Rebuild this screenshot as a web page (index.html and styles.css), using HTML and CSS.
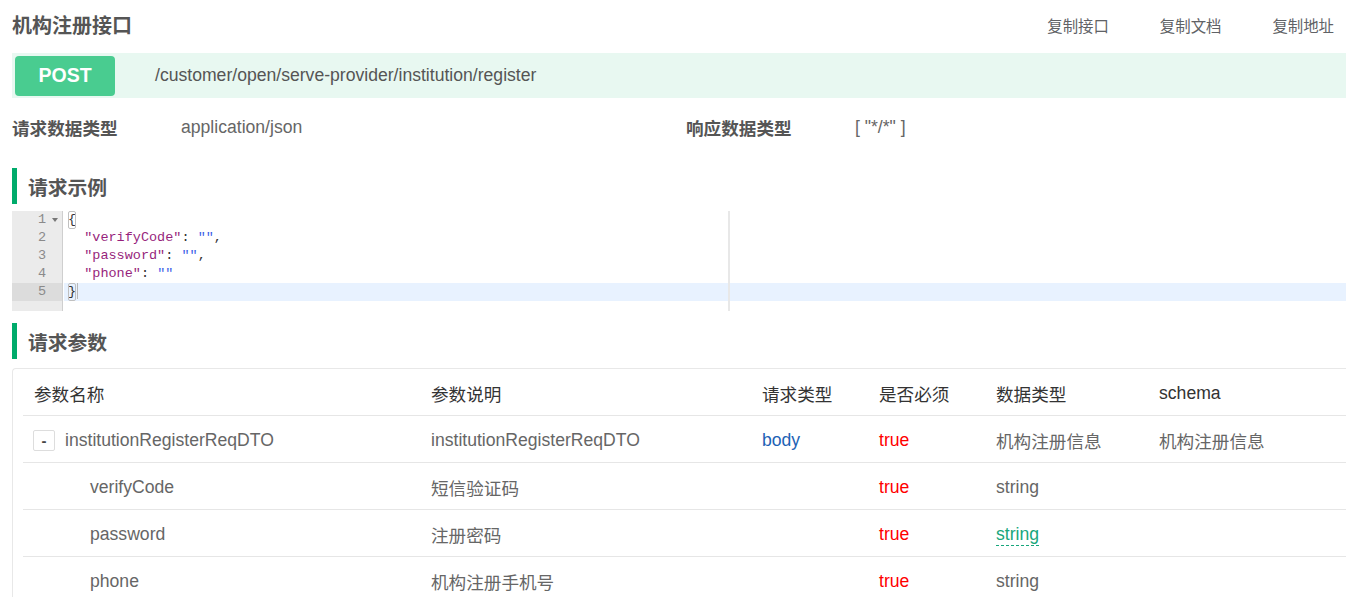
FILE: index.html
```html
<!DOCTYPE html>
<html lang="zh-CN">
<head>
<meta charset="utf-8">
<title>机构注册接口</title>
<link rel="stylesheet" href="styles.css">
</head>
<body>
<div class="page">
  <header class="top">
    <h1 class="title">机构注册接口</h1>
    <nav class="copy-links">
      <a class="copy-link">复制接口</a>
      <a class="copy-link">复制文档</a>
      <a class="copy-link">复制地址</a>
    </nav>
  </header>

  <div class="method-bar">
    <span class="method">POST</span>
    <span class="path">/customer/open/serve-provider/institution/register</span>
  </div>

  <div class="types">
    <div class="type-item">
      <span class="type-label">请求数据类型</span>
      <span class="type-value">application/json</span>
    </div>
    <div class="type-item">
      <span class="type-label">响应数据类型</span>
      <span class="type-value">[ "*/*" ]</span>
    </div>
  </div>

  <h2 class="section-title">请求示例</h2>

  <div class="editor">
    <div class="gutter">
      <div class="gutter-cell">1<span class="fold"></span></div>
      <div class="gutter-cell">2</div>
      <div class="gutter-cell">3</div>
      <div class="gutter-cell">4</div>
      <div class="gutter-cell active">5</div>
    </div>
    <div class="code">
      <div class="line"><span class="bracket">{</span></div>
      <div class="line">  <span class="key">"verifyCode"</span>: <span class="str">""</span>,</div>
      <div class="line">  <span class="key">"password"</span>: <span class="str">""</span>,</div>
      <div class="line">  <span class="key">"phone"</span>: <span class="str">""</span></div>
      <div class="line active"><span class="bracket">}</span><span class="cursor"></span></div>
      <div class="print-margin"></div>
    </div>
  </div>

  <h2 class="section-title">请求参数</h2>

  <div class="param-table">
    <div class="row head">
      <div class="cell">参数名称</div>
      <div class="cell">参数说明</div>
      <div class="cell">请求类型</div>
      <div class="cell">是否必须</div>
      <div class="cell">数据类型</div>
      <div class="cell">schema</div>
    </div>
    <div class="row">
      <div class="cell name-cell"><span class="toggle">-</span>institutionRegisterReqDTO</div>
      <div class="cell">institutionRegisterReqDTO</div>
      <div class="cell in-body">body</div>
      <div class="cell required">true</div>
      <div class="cell">机构注册信息</div>
      <div class="cell">机构注册信息</div>
    </div>
    <div class="row">
      <div class="cell child">verifyCode</div>
      <div class="cell">短信验证码</div>
      <div class="cell"></div>
      <div class="cell required">true</div>
      <div class="cell">string</div>
      <div class="cell"></div>
    </div>
    <div class="row">
      <div class="cell child">password</div>
      <div class="cell">注册密码</div>
      <div class="cell"></div>
      <div class="cell required">true</div>
      <div class="cell"><span class="type-hint">string</span></div>
      <div class="cell"></div>
    </div>
    <div class="row">
      <div class="cell child">phone</div>
      <div class="cell">机构注册手机号</div>
      <div class="cell"></div>
      <div class="cell required">true</div>
      <div class="cell">string</div>
      <div class="cell"></div>
    </div>
  </div>
</div>
</body>
</html>
```

FILE: styles.css
```css
* { box-sizing: border-box; }

html, body {
  margin: 0;
  padding: 0;
  background: #fff;
  overflow: hidden;
}

body {
  font-family: "Liberation Sans", "Noto Sans CJK SC", sans-serif;
  color: #666;
}

.page {
  padding-left: 12px;
}

/* header */
.top {
  height: 48px;
  display: flex;
  align-items: center;
  justify-content: space-between;
  padding-right: 12px;
}

.title {
  margin: 0;
  font-size: 20px;
  font-weight: bold;
  color: #555;
}

.copy-links {
  display: flex;
  gap: 51px;
  padding-top: 2px;
}

.copy-link {
  font-size: 15.4px;
  color: #606266;
  cursor: pointer;
}

/* method bar */
.method-bar {
  margin-top: 5px;
  height: 45px;
  background: #e8f8f1;
  display: flex;
  align-items: center;
  padding-left: 3px;
}

.method {
  width: 100px;
  height: 40px;
  border-radius: 4px;
  background: #49cc90;
  color: #fff;
  font-weight: bold;
  font-size: 19.5px;
  display: flex;
  align-items: center;
  justify-content: center;
}

.path {
  margin-left: 40px;
  font-size: 17.6px;
  color: #555;
}

/* types */
.types {
  height: 58px;
  display: grid;
  grid-template-columns: 674px 1fr;
  align-items: center;
}

.type-item {
  display: flex;
  align-items: center;
}

.type-label {
  width: 169px;
  font-size: 17.6px;
  font-weight: bold;
  color: #555;
}

.type-value {
  font-size: 17.6px;
  color: #666;
}

/* section titles */
.section-title {
  margin: 12px 0 0 0;
  height: 36px;
  border-left: 5px solid #00ab6b;
  padding-left: 11px;
  display: flex;
  align-items: center;
  font-size: 19.8px;
  font-weight: bold;
  color: #555;
}

/* editor */
.editor {
  margin-top: 7px;
  height: 100px;
  display: flex;
}

.gutter {
  width: 51px;
  flex: none;
  background: #ebebeb;
  border-right: 1px solid #cfcfcf;
  font-family: "Liberation Mono", "DejaVu Sans Mono", monospace;
  font-size: 13.5px;
  color: #8a8a8a;
}

.gutter-cell {
  position: relative;
  height: 18px;
  line-height: 18px;
  text-align: right;
  padding-right: 16px;
}

.gutter-cell.active {
  background: #dcdcdc;
}

.fold {
  position: absolute;
  right: 4px;
  top: 7px;
  width: 0;
  height: 0;
  border-left: 3px solid transparent;
  border-right: 3px solid transparent;
  border-top: 4px solid #777;
}

.code {
  position: relative;
  flex: 1;
  margin-left: 1px;
  font-family: "Liberation Mono", "DejaVu Sans Mono", monospace;
  font-size: 13.5px;
  color: #333;
}

.line {
  height: 18px;
  line-height: 18px;
  padding-left: 4px;
  white-space: pre;
}

.line.active {
  background: #e8f2ff;
}

.key { color: #971f7c; }
.str { color: #3d5fe8; }

.bracket {
  display: inline-block;
  outline: 1px solid #c0c0c0;
  outline-offset: -1px;
  border-radius: 2px;
}

.cursor {
  display: inline-block;
  width: 1px;
  height: 16px;
  background: #b8b8b8;
  vertical-align: middle;
  margin-left: 1px;
}

.print-margin {
  position: absolute;
  top: 0;
  bottom: 0;
  left: 664px;
  width: 2px;
  background: #e8e8e8;
}

/* params table */
.param-table {
  margin-top: 9px;
  border: 1px solid #e8e8e8;
  border-right: none;
  border-radius: 4px 0 0 4px;
  padding-left: 10px;
}

.row {
  display: grid;
  grid-template-columns: 397px 331px 117px 117px 163px 1fr;
  height: 47px;
  border-bottom: 1px solid #e6e6e6;
  align-items: center;
  font-size: 17.6px;
  color: #666;
}

.row.head {
  color: #333;
}

.cell {
  padding-left: 11px;
  padding-top: 2px;
  white-space: nowrap;
}

.name-cell {
  display: flex;
  align-items: center;
  padding-left: 10px;
}

.toggle {
  width: 22px;
  height: 21px;
  border: 1px solid #ddd;
  border-radius: 2px;
  margin-right: 10px;
  display: flex;
  align-items: center;
  justify-content: center;
  font-size: 15px;
  font-weight: bold;
  color: #444;
}

.child {
  padding-left: 67px;
}

.in-body { color: #1e62b5; }
.required { color: #ff0000; }

.type-hint {
  color: #17a67c;
  border-bottom: 1px dashed #17a67c;
  padding-bottom: 1px;
}
```
